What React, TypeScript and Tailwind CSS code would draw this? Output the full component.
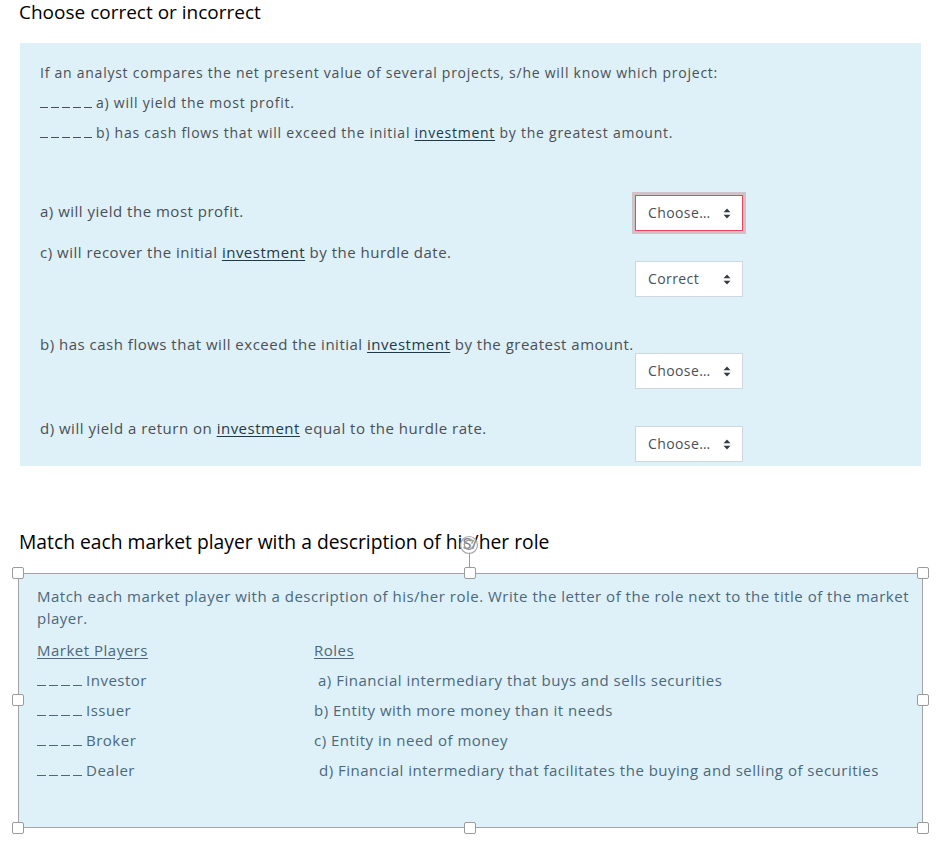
import React from 'react';

const body = { fontFamily: '"Open Sans", "DejaVu Sans", sans-serif' };
const title = { fontFamily: '"Open Sans", "Liberation Sans", sans-serif' };

function Dashes({ count, wide }: { count: number; wide?: boolean }) {
  return (
    <span className={`inline-flex items-end gap-[3px] align-baseline ${wide ? 'mr-[4px]' : 'mr-[4px]'}`}>
      {Array.from({ length: count }).map((_, i) => (
        <span key={i} className={`block h-px bg-current ${wide ? 'w-[9px]' : 'w-[8px]'}`} />
      ))}
    </span>
  );
}

function SortIcon() {
  return (
    <svg width="8" height="11" viewBox="0 0 8 11" className="shrink-0">
      <path d="M4 0.5 L7.5 4.3 L0.5 4.3 Z" fill="#343a40" />
      <path d="M4 10.5 L7.5 6.7 L0.5 6.7 Z" fill="#343a40" />
    </svg>
  );
}

function Select({ label, focused }: { label: string; focused?: boolean }) {
  return (
    <div
      className={`flex h-[36px] w-[108px] items-center justify-between bg-white pl-[12px] pr-[11px] text-[14px] tracking-[0.4px] text-[#495057] ${
        focused ? 'border border-[#e8475f] ring-[3px] ring-[#cfc3c8]' : 'border border-[#d0d7dc]'
      }`}
      style={body}
    >
      <span>{label}</span>
      <SortIcon />
    </div>
  );
}

function Link({ children }: { children: React.ReactNode }) {
  return <span className="underline underline-offset-2 text-[#1d3a48]">{children}</span>;
}

function Handle({ className }: { className: string }) {
  return <div className={`absolute h-[12px] w-[12px] rounded-[2px] border border-[#9b9b9b] bg-white ${className}`} />;
}

export default function App() {
  return (
    <div className="min-h-[843px] w-[937px] bg-white pt-[1px]">
      <h1 className="ml-[19px] text-[19px] leading-[22px] text-black" style={title}>
        Choose correct or incorrect
      </h1>

      {/* Correct / incorrect question */}
      <div className="ml-[20px] mt-[20px] w-[901px] bg-[#dff1f8] pl-[20px] pt-[15px] pb-[6px] text-[#4a4f55]" style={body}>
        <div className="text-[14px] tracking-[0.75px] leading-[30px]">
          <p>If an analyst compares the net present value of several projects, s/he will know which project:</p>
          <p>
            <Dashes count={5} />a) will yield the most profit.
          </p>
          <p>
            <Dashes count={5} />b) has cash flows that will exceed the initial <Link>investment</Link> by the greatest
            amount.
          </p>
        </div>

        <div className="mt-[47px] text-[15px] tracking-[0.5px] leading-[20px]">
          <div className="flex h-[47px] items-start">
            <div className="mt-[6px] w-[595px]">a) will yield the most profit.</div>
            <Select label="Choose…" focused />
          </div>
          <div className="flex h-[92px] items-start">
            <div className="w-[595px]">
              c) will recover the initial <Link>investment</Link> by the hurdle date.
            </div>
            <div className="mt-[19px]">
              <Select label="Correct" />
            </div>
          </div>
          <div className="flex h-[84px] items-start">
            <div className="w-[595px] whitespace-nowrap">
              b) has cash flows that will exceed the initial <Link>investment</Link> by the greatest amount.
            </div>
            <div className="mt-[19px]">
              <Select label="Choose…" />
            </div>
          </div>
          <div className="flex h-[42px] items-start">
            <div className="w-[595px]">
              d) will yield a return on <Link>investment</Link> equal to the hurdle rate.
            </div>
            <div className="mt-[8px]">
              <Select label="Choose…" />
            </div>
          </div>
        </div>
      </div>

      <h2 className="ml-[19px] mt-[65px] text-[19.3px] leading-[22px] text-black" style={title}>
        Match each market player with a description of his/her role
      </h2>

      {/* Matching question, shown as a selected text box */}
      <div className="relative ml-[18px] mt-[20px] h-[255px] w-[905px] border border-[#a3a3a3] bg-[#dff1f8] pl-[18px] pt-[11px] text-[15px] tracking-[0.5px] text-[#4b687c]" style={body}>
        <p className="leading-[22px] pr-[8px]">
          Match each market player with a description of his/her role. Write the letter of the role next to the title of
          the market player.
        </p>
        <div className="mt-[6px] grid grid-cols-[277px_1fr] leading-[30px]">
          <div className="underline underline-offset-2">Market Players</div>
          <div className="underline underline-offset-2">Roles</div>

          <div><Dashes count={4} wide />Investor</div>
          <div className="pl-[4px]">a) Financial intermediary that buys and sells securities</div>

          <div><Dashes count={4} wide />Issuer</div>
          <div>b) Entity with more money than it needs</div>

          <div><Dashes count={4} wide />Broker</div>
          <div>c) Entity in need of money</div>

          <div><Dashes count={4} wide />Dealer</div>
          <div className="pl-[5px]">d) Financial intermediary that facilitates the buying and selling of securities</div>
        </div>

        {/* selection handles */}
        <Handle className="-left-[7px] -top-[7px]" />
        <Handle className="left-[445px] -top-[7px]" />
        <Handle className="-right-[7px] -top-[7px]" />
        <Handle className="-left-[7px] top-[120px]" />
        <Handle className="-right-[7px] top-[120px]" />
        <Handle className="-left-[7px] -bottom-[7px]" />
        <Handle className="left-[445px] -bottom-[7px]" />
        <Handle className="-right-[7px] -bottom-[7px]" />
        <div className="absolute left-[450px] -top-[22px] h-[16px] w-px bg-[#9b9b9b]" />
        <svg className="absolute left-[440px] -top-[39px]" width="20" height="20" viewBox="0 0 20 20">
          <circle cx="10" cy="10" r="8.5" fill="white" fillOpacity="0.5" stroke="#a8a8a8" strokeWidth="1.2" />
          <path d="M14 11.5 A4.5 4.5 0 1 1 12.5 6.2" fill="none" stroke="#9b9b9b" strokeWidth="1.4" />
          <path d="M11 4.5 L14.2 5.6 L12.6 8.6" fill="none" stroke="#9b9b9b" strokeWidth="1.4" />
        </svg>
      </div>
    </div>
  );
}
